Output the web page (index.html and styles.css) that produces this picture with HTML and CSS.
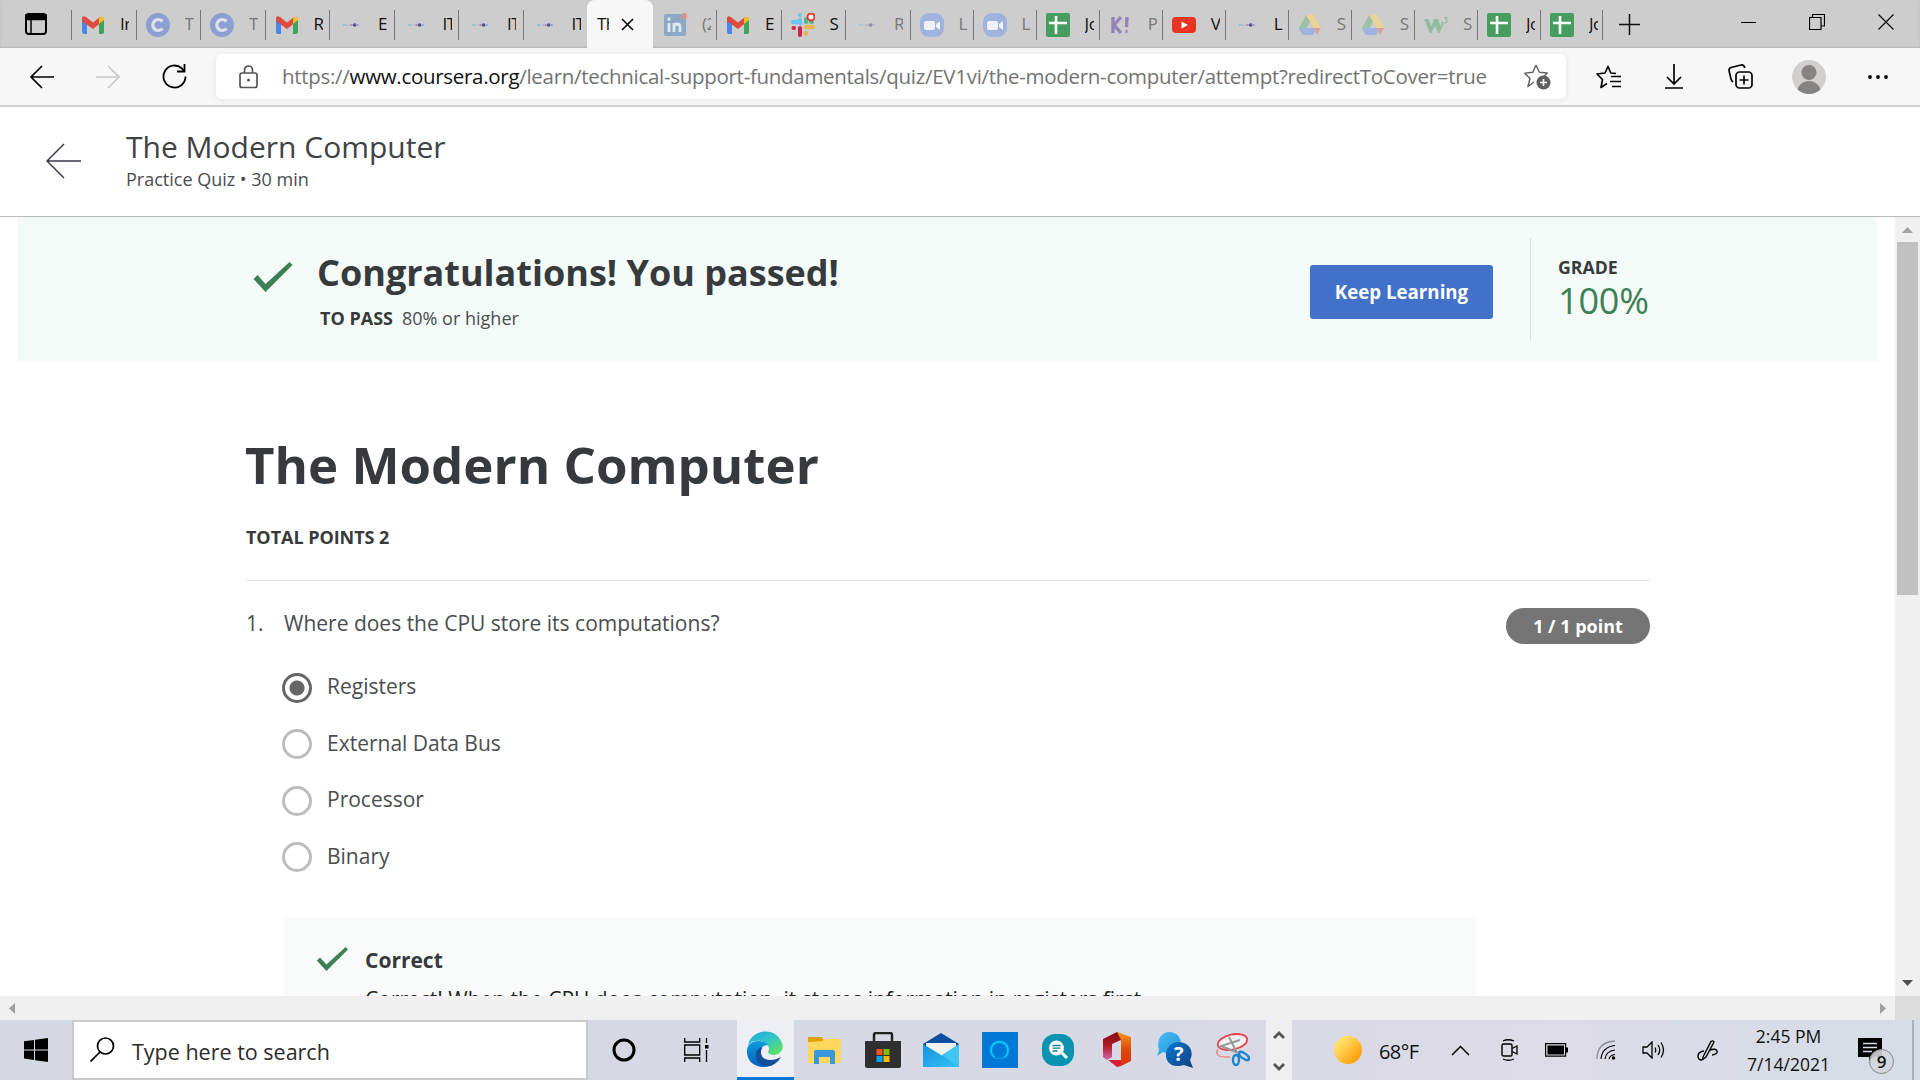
FILE: index.html
```
<!DOCTYPE html>
<html lang="en">
<head>
<meta charset="utf-8">
<title>The Modern Computer</title>
<link rel="stylesheet" href="styles.css">
</head>
<body>
<svg class="defs" width="0" height="0">
  <defs>
    <linearGradient id="edgeTop" x1="0" y1="0" x2="1" y2="1"><stop offset="0" stop-color="#1fa7e0"/><stop offset=".45" stop-color="#2fc3c9"/><stop offset="1" stop-color="#6bea48"/></linearGradient>
    <linearGradient id="edgeLow" x1="0" y1="0" x2="0" y2="1"><stop offset="0" stop-color="#0d9bdc"/><stop offset="1" stop-color="#0a5fc0"/></linearGradient>
    <linearGradient id="sunFill" x1="0" y1="0" x2="1" y2="1"><stop offset=".2" stop-color="#ffe26b"/><stop offset=".9" stop-color="#ff9800"/></linearGradient>
    <linearGradient id="officeLeft" x1="0" y1="0" x2="0" y2="1"><stop offset="0" stop-color="#7d0a10"/><stop offset=".5" stop-color="#b01c28"/><stop offset="1" stop-color="#d06aa8"/></linearGradient>
    <linearGradient id="officeRight" x1="0" y1="0" x2="0" y2="1"><stop offset="0" stop-color="#f49a1c"/><stop offset=".5" stop-color="#dd4a0c"/><stop offset="1" stop-color="#e0340f"/></linearGradient>
    <linearGradient id="bubble" x1="0" y1="0" x2="1" y2="1"><stop offset="0" stop-color="#4cc0f5"/><stop offset="1" stop-color="#1a93d8"/></linearGradient>
    <linearGradient id="bubbleDark" x1="0" y1="0" x2="1" y2="1"><stop offset="0" stop-color="#0a78d4"/><stop offset="1" stop-color="#123f7c"/></linearGradient>
    <linearGradient id="mailBody" x1="0" y1="0" x2="1" y2="1"><stop offset="0" stop-color="#1390e0"/><stop offset="1" stop-color="#37c2f3"/></linearGradient>
    <symbol id="gmail" viewBox="0 0 22 18"><path d="M0 3v13q0 2 2 2h3V7z" fill="#4a86e8"/><path d="M22 3v13q0 2-2 2h-3V7z" fill="#3fa45b"/><path d="M5 8V2.300Q0-2 0 4z" fill="#b9302a"/><path d="M0 3.500Q0-1 4 1l7 5.500L18 1v6.500l-7 5.500L0 5z" fill="#dc4b3e"/><path d="M17 8V2Q22-2 22 4z" fill="#f4bd2c"/></symbol>
    <symbol id="cbadge" viewBox="0 0 24 24"><circle cx="12" cy="12" r="12" fill="#8b9fd3"/><path d="M16.500 8.500a5.500 5.500 0 1 0 0 7" fill="none" stroke="#dde1ec" stroke-width="3.200"/></symbol>
    <symbol id="dots" viewBox="0 0 16 6"><path d="M0 3h4" stroke="#8fbcdc" stroke-width="1.600"/><circle cx="6.500" cy="3" r="1.100" fill="#c8a0b4"/><circle cx="8.800" cy="3" r="1.100" fill="#c07888"/><circle cx="11.700" cy="3" r="1.800" fill="#3f569f"/><circle cx="14.800" cy="3" r="1" fill="#8d99c8"/></symbol>
    <symbol id="zoomcam" viewBox="0 0 24 24"><rect width="24" height="24" rx="9" fill="#9fb3de"/><rect x="4" y="8" width="11" height="9" rx="2" fill="#eef1f8"/><path d="M16 11l4-3v9l-4-3z" fill="#eef1f8"/></symbol>
    <symbol id="sheet" viewBox="0 0 24 24"><rect width="24" height="24" rx="2" fill="#479d5e"/><path d="M10 3v18M3 10h18" stroke="#fff" stroke-width="2.600"/></symbol>
    <symbol id="drive" viewBox="0 0 22 20"><path d="M7 0h8l-7.500 14L4 20 0 13z" fill="#9fc0a4"/><path d="M7 0h8l7 13h-7z" fill="#ead595"/><path d="M4 13h14l-3.500 7H4L0 14z" fill="#9fb4e0"/><path d="M15 13h7l-4 7z" fill="#dd9f9c"/><path d="M11 7l3.500 6h-7z" fill="#cdcdcd"/></symbol>
    <symbol id="tick" viewBox="0 0 40 30"><path d="M1 17l4-4 8 9L37 0l3 3-27 27z"/></symbol>
  </defs>
</svg>

<header class="tabs">
  <div class="tab-menu"><svg width="22" height="22" viewBox="0 0 22 22"><rect x="1" y="1" width="20" height="20" rx="3" fill="none" stroke="#000" stroke-width="2"/><path d="M1 2h20v4.500H1zM6 6v15" stroke="#000" stroke-width="1.500"/></svg></div>
  <div class="tab"><svg class="fav" viewBox="0 0 24 24"><use href="#gmail" x="1" y="3" width="22" height="18"/></svg><span>Ir</span></div>
  <div class="tab asleep"><svg class="fav" viewBox="0 0 24 24"><use href="#cbadge"/></svg><span>Te</span></div>
  <div class="tab asleep"><svg class="fav" viewBox="0 0 24 24"><use href="#cbadge"/></svg><span>Te</span></div>
  <div class="tab"><svg class="fav" viewBox="0 0 24 24"><use href="#gmail" x="1" y="3" width="22" height="18"/></svg><span>R</span></div>
  <div class="tab"><svg class="fav" viewBox="0 0 24 24"><use href="#dots" x="4" y="9" width="16" height="6"/></svg><span>E</span></div>
  <div class="tab"><svg class="fav" viewBox="0 0 24 24"><use href="#dots" x="4" y="9" width="16" height="6"/></svg><span>IT</span></div>
  <div class="tab"><svg class="fav" viewBox="0 0 24 24"><use href="#dots" x="4" y="9" width="16" height="6"/></svg><span>IT</span></div>
  <div class="tab"><svg class="fav" viewBox="0 0 24 24"><use href="#dots" x="4" y="9" width="16" height="6"/></svg><span>IT</span></div>
  <div class="tab active"><span>Th</span><svg width="13" height="13" viewBox="0 0 13 13"><path d="M1 1l11 11M12 1L1 12" stroke="#000" stroke-width="1.600"/></svg></div>
  <div class="tab asleep first"><svg class="fav" viewBox="0 0 24 24"><rect x="1" y="1" width="22" height="22" rx="2" fill="#8ba9c6"/><path d="M6 10v9M11 19v-9M11 14q0-3 3-3t3 3v5" fill="none" stroke="#e3e8ee" stroke-width="2.800"/><circle cx="6" cy="6" r="1.700" fill="#e3e8ee"/><circle cx="21" cy="3" r="3" fill="#d8918d"/></svg><span>(2</span></div>
  <div class="tab"><svg class="fav" viewBox="0 0 24 24"><use href="#gmail" x="1" y="3" width="22" height="18"/></svg><span>E</span></div>
  <div class="tab"><svg class="fav" viewBox="0 0 24 24"><g stroke-width="4" stroke-linecap="round"><path d="M9 2v0M9 7v3M2 9h5" stroke="#64c5ee"/><path d="M15 9V6M20 9h1" stroke="#52b98b"/><path d="M15 14h7M15 20v1" stroke="#e7b548"/><path d="M9 15v7M2.500 15h.500" stroke="#d0224f"/></g><circle cx="20" cy="4" r="3.500" fill="#fff" stroke="#dc3b32" stroke-width="2"/></svg><span>S</span></div>
  <div class="tab asleep"><svg class="fav faded" viewBox="0 0 24 24"><use href="#dots" x="4" y="9" width="16" height="6"/></svg><span>R</span></div>
  <div class="tab asleep"><svg class="fav" viewBox="0 0 24 24"><use href="#zoomcam"/></svg><span>L</span></div>
  <div class="tab asleep"><svg class="fav" viewBox="0 0 24 24"><use href="#zoomcam"/></svg><span>L</span></div>
  <div class="tab"><svg class="fav" viewBox="0 0 24 24"><use href="#sheet"/></svg><span>Jo</span></div>
  <div class="tab asleep"><svg class="fav" viewBox="0 0 24 24"><path d="M4 4v16M12 4l-7 8 7 8M18 4l-.500 10M16.500 18.500h2" fill="none" stroke="#9583b8" stroke-width="3.400"/></svg><span>P</span></div>
  <div class="tab"><svg class="fav" viewBox="0 0 24 24"><rect y="4" width="24" height="16" rx="4" fill="#e93323"/><path d="M9.500 8.500l6.500 3.500-6.500 3.500z" fill="#fff"/></svg><span>V</span></div>
  <div class="tab"><svg class="fav" viewBox="0 0 24 24"><use href="#dots" x="4" y="9" width="16" height="6"/></svg><span>L</span></div>
  <div class="tab asleep"><svg class="fav" viewBox="0 0 24 24"><use href="#drive" x="1" y="2" width="22" height="20"/></svg><span>S</span></div>
  <div class="tab asleep"><svg class="fav" viewBox="0 0 24 24"><use href="#drive" x="1" y="2" width="22" height="20"/></svg><span>S</span></div>
  <div class="tab asleep"><svg class="fav" viewBox="0 0 24 24"><path d="M0 6h4.500l3 7 2.500-7h4l2.500 7 2-5 1 3-4 9h-1l-3.500-7-3.500 7h-1.500z" fill="#93bda3"/><path d="M20 4.500h3l-1.500 2q2 0 1.500 2t-3 1" fill="none" stroke="#93bda3" stroke-width="1.200"/></svg><span>S</span></div>
  <div class="tab"><svg class="fav" viewBox="0 0 24 24"><use href="#sheet"/></svg><span>Jo</span></div>
  <div class="tab last"><svg class="fav" viewBox="0 0 24 24"><use href="#sheet"/></svg><span>Jo</span></div>
  <div class="new-tab"><svg width="21" height="21" viewBox="0 0 21 21"><path d="M10.500 0v21M0 10.500h21" stroke="#111" stroke-width="1.500"/></svg></div>
  <div class="win-buttons">
    <svg width="16" height="16" viewBox="0 0 16 16"><path d="M1 8.500h15" stroke="#000"/></svg>
    <svg width="16" height="16" viewBox="0 0 16 16"><path d="M.500 3.500h11.500v12H.500zM3.500 3V.500h12V12H12.500" fill="none" stroke="#000" stroke-width="1.200"/></svg>
    <svg width="16" height="16" viewBox="0 0 16 16"><path d="M.500.500l15 15M15.500.500l-15 15" stroke="#000" stroke-width="1.100"/></svg>
  </div>
</header>

<nav class="toolbar">
  <div class="tool"><svg width="26" height="24" viewBox="0 0 26 24"><path d="M13 1L2 12l11 11M2 12h23" fill="none" stroke="#000" stroke-width="1.700"/></svg></div>
  <div class="tool"><svg width="26" height="24" viewBox="0 0 26 24"><path d="M13 1l11 11-11 11M24 12H1" fill="none" stroke="#c9c9c9" stroke-width="1.700"/></svg></div>
  <div class="tool"><svg width="25" height="25" viewBox="0 0 25 25"><path d="M23.500 12.500a11 11 0 1 1-3.500-8L22 7" fill="none" stroke="#000" stroke-width="1.800"/><path d="M22.500 0v7.500H15" fill="none" stroke="#000" stroke-width="1.800"/></svg></div>
  <div class="address">
    <svg width="20" height="24" viewBox="0 0 20 24"><rect x="1" y="8" width="17" height="14.500" rx="2" fill="none" stroke="#555" stroke-width="1.700"/><path d="M5.500 8V5a4 4 0 0 1 8 0v3" fill="none" stroke="#555" stroke-width="1.700"/><circle cx="9.500" cy="15" r="1.500" fill="#555"/></svg>
    <span class="url">https://<b>www.coursera.org</b>/learn/technical-support-fundamentals/quiz/EV1vi/the-modern-computer/attempt?redirectToCover=true</span>
    <svg width="27" height="26" viewBox="0 0 27 26"><path d="M12 1l3.300 7.200 8 .800-4 4M10 18l-6 4.500 2-8-5.200-5.200 8-1.100L12 1" fill="none" stroke="#666" stroke-width="1.500" stroke-linejoin="round"/><circle cx="19.500" cy="18.500" r="7" fill="#5f5f5f"/><path d="M19.500 15v7M16 18.500h7" stroke="#fff" stroke-width="1.600"/></svg>
  </div>
  <div class="tool"><svg width="25" height="24" viewBox="0 0 25 24"><path d="M20 8.500l-5.200-.500L12 1.500 9 8l-8 1 5.500 5.500L5 22.500l6-4" fill="none" stroke="#000" stroke-width="1.700" stroke-linejoin="round"/><path d="M15 11.500h10M14 16.500h11M16 21.500h9" stroke="#000" stroke-width="1.700"/></svg></div>
  <div class="tool"><svg width="18" height="25" viewBox="0 0 18 25"><path d="M9 0v20M2 13l7 7 7-7M0 24h18" fill="none" stroke="#000" stroke-width="1.700"/></svg></div>
  <div class="tool"><svg width="25" height="25" viewBox="0 0 25 25"><rect x="8" y="8" width="16" height="16" rx="3.500" fill="none" stroke="#000" stroke-width="1.700"/><path d="M16 11.500v9M11.500 16h9M5 18q-1.500-1-2-3L1 6.500Q1 4 3 3.500L13 1q3-.500 3.800 3" fill="none" stroke="#000" stroke-width="1.700"/></svg></div>
  <div class="tool profile"><svg width="34" height="34" viewBox="0 0 34 34"><clipPath id="av"><circle cx="17" cy="17" r="17"/></clipPath><g clip-path="url(#av)"><rect width="34" height="34" fill="#d2d0ce"/><circle cx="17" cy="12.500" r="7.500" fill="#868483"/><circle cx="17" cy="33" r="12" fill="#868483"/></g></svg></div>
  <div class="tool"><svg width="22" height="4" viewBox="0 0 22 4"><circle cx="4" cy="2" r="1.900"/><circle cx="12" cy="2" r="1.900"/><circle cx="20" cy="2" r="1.900"/></svg></div>
</nav>

<section class="course-bar">
  <svg width="36" height="36" viewBox="0 0 36 36"><path d="M18 1L1 18l17 17M1 18h34" fill="none" stroke="#373a4c" stroke-width="1.500"/></svg>
  <div>
    <h2>The Modern Computer</h2>
    <p>Practice Quiz • 30 min</p>
  </div>
</section>

<div class="viewport">
  <main class="page">
    <section class="banner">
      <svg class="green" width="41" height="30"><use href="#tick" width="41" height="30"/></svg>
      <div class="result">
        <h1>Congratulations! You passed!</h1>
        <p><strong>TO PASS</strong><span>80% or higher</span></p>
      </div>
      <button class="keep">Keep Learning</button>
      <div class="grade"><strong>GRADE</strong><span>100%</span></div>
    </section>
    <section class="quiz">
      <h1>The Modern Computer</h1>
      <h3>TOTAL POINTS 2</h3>
      <div class="question">
        <span class="number">1.</span>
        <p>Where does the CPU store its computations?</p>
        <span class="pill">1 / 1 point</span>
      </div>
      <ul class="options">
        <li><i class="radio on"></i>Registers</li>
        <li><i class="radio"></i>External Data Bus</li>
        <li><i class="radio"></i>Processor</li>
        <li><i class="radio"></i>Binary</li>
      </ul>
      <div class="feedback">
        <svg class="green" width="32" height="24"><use href="#tick" width="32" height="24"/></svg>
        <div><h4>Correct</h4><p>Correct! When the CPU does computation, it stores information in registers first.</p></div>
      </div>
    </section>
  </main>
  <aside class="scroll-y">
    <svg width="11" height="6" viewBox="0 0 11 6"><path d="M0 6L5.500 0 11 6z" fill="#a3a3a3"/></svg>
    <div class="thumb"></div>
    <svg class="down" width="11" height="6" viewBox="0 0 11 6"><path d="M0 0h11L5.500 6z" fill="#505050"/></svg>
  </aside>
</div>
<div class="scroll-x">
  <svg width="6" height="11" viewBox="0 0 6 11"><path d="M6 0v11L0 5.500z" fill="#a3a3a3"/></svg>
  <svg class="right" width="6" height="11" viewBox="0 0 6 11"><path d="M0 0v11l6-5.500z" fill="#a3a3a3"/></svg>
  <div class="corner"></div>
</div>

<footer class="taskbar">
  <div class="start"><svg width="24" height="24" viewBox="0 0 24 24"><path d="M0 3.300l10-1.400v9.500H0zM11 1.700L24 0v11.400H11zM0 12.400h10v9.500L0 20.600zM11 12.400h13V24l-13-1.800z"/></svg></div>
  <div class="search"><svg width="25" height="25" viewBox="0 0 25 25"><circle cx="15.500" cy="9" r="8" fill="none" stroke="#000" stroke-width="1.700"/><path d="M10 15L.500 24.500" stroke="#000" stroke-width="1.700"/></svg><span>Type here to search</span></div>
  <div class="cell wide"><svg width="24" height="24" viewBox="0 0 24 24"><circle cx="12" cy="12" r="10" fill="none" stroke="#000" stroke-width="3"/></svg></div>
  <div class="cell view"><svg width="25" height="24" viewBox="0 0 25 24"><path d="M.700 0v4h15V0M.700 24v-4h15v4M.700 7h15v10H.700zM22.500 0v5M22.500 12v12" fill="none" stroke="#000" stroke-width="1.300"/><path d="M21 7h3.500v3.500H21z"/></svg></div>
  <div class="cell running"><svg width="36" height="36" viewBox="0 0 36 36"><path d="M1 14C5-3 31-5 35.500 14c1.500 8-7 12-13 9-3-2 0-3-.500-6C20 9 6 7 1 14z" fill="url(#edgeTop)"/><path d="M0 19C1 8 16 8 21 14q-8 0-7 9 2 9 12 11C10 40-1 31 0 19z" fill="url(#edgeLow)"/><path d="M14 20c-1 10 11 11 20 6q-5 9-15 9.500C7 34 5 19 15 16z" fill="#12509c"/></svg></div>
  <div class="cell"><svg width="33" height="28" viewBox="0 0 33 28"><path d="M0 1h14l2 4-2 3H0z" fill="#e0a000"/><path d="M0 6l14-1 2-2h17v24H0z" fill="#ffd75e"/><path d="M6 28V16q0-2 2-2h17q2 0 2 2v12h-5v-7H11v7z" fill="#3a96dd"/></svg></div>
  <div class="cell"><svg width="36" height="36" viewBox="0 0 36 36"><path d="M9 12V3q0-2 2-2h14q2 0 2 2v9" fill="none" stroke="#222" stroke-width="2.500"/><path d="M0 9h36v25q0 2-2 2H2q-2 0-2-2z" fill="#2f2f2f"/><path d="M11.500 17h6v6h-6z" fill="#f25022"/><path d="M18.500 17h6v6h-6z" fill="#7fba00"/><path d="M11.500 24h6v6h-6z" fill="#00a4ef"/><path d="M18.500 24h6v6h-6z" fill="#ffb900"/></svg></div>
  <div class="cell"><svg width="36" height="34" viewBox="0 0 36 34"><path d="M0 11L18 0l18 11v6H0z" fill="#0a4fa0"/><path d="M3 10h30v6L18 24 3 16z" fill="#f2f2f2"/><path d="M36 11L0 34h36z" fill="#41c6f3"/><path d="M0 11l36 22v1H0z" fill="url(#mailBody)"/></svg></div>
  <div class="cell"><svg width="36" height="36" viewBox="0 0 36 36"><path d="M0 0h36v36H0z" fill="#0078d7"/><path d="M13 25.500a8.500 8.500 0 1 1 9 0" fill="none" stroke="#00caff" stroke-width="2"/><path d="M13 26.500h9" stroke="#00a5f0"/></svg></div>
  <div class="cell"><svg width="32" height="32" viewBox="0 0 32 32"><rect width="32" height="32" rx="13" fill="#0a93b0"/><circle cx="14.500" cy="14" r="7.500" fill="#fff"/><path d="M19 18l6 6" stroke="#fff" stroke-width="3"/><path d="M10.500 11.500h8M10.500 14.200h8M10.500 17h5" stroke="#0a7f9a" stroke-width="1.300"/></svg></div>
  <div class="cell"><svg width="28" height="35" viewBox="0 0 28 35"><path d="M14 0l4 2v6l-9 4v13l-5 3-4-3V7z" fill="url(#officeLeft)"/><path d="M14 0l14 5v24l-10 5V8z" fill="url(#officeRight)"/><path d="M5 28h13v6l-4 1z" fill="#d51f3a"/></svg></div>
  <div class="cell"><svg width="37" height="36" viewBox="0 0 37 36"><path d="M0 24l2-6C-1 9 4 0 12 0c9 0 14 8 11 15-3 6-11 8-17 5z" fill="url(#bubble)"/><path d="M21 10c13 0 16 11 12 18l3 8-9-3C14 37 8 29 9 21q2-10 12-11z" fill="url(#bubbleDark)"/><text x="17" y="29" class="help">?</text></svg></div>
  <div class="cell last-cell"><svg width="34" height="34" viewBox="0 0 34 34"><path d="M2 16q-5 9 12 8" fill="none" stroke="#e88" stroke-width="1.500"/><ellipse cx="16.500" cy="9" rx="15" ry="7.500" transform="rotate(-12 16.500 9)" fill="#f4f4f6" stroke="#e8414a" stroke-width="1.800"/><path d="M13 4l8 16M24 7L5 13l15 6" fill="none" stroke="#999" stroke-width="2"/><ellipse cx="20" cy="27" rx="3" ry="5" fill="none" stroke="#1c86cd" stroke-width="2.400"/><ellipse cx="28" cy="23" rx="6" ry="2.600" transform="rotate(35 28 23)" fill="none" stroke="#1c86cd" stroke-width="2.400"/></svg></div>
  <div class="spin"><svg width="12" height="9" viewBox="0 0 12 9"><path d="M1 8l5-5 5 5" fill="none" stroke="#555" stroke-width="2.800"/></svg><svg width="12" height="9" viewBox="0 0 12 9"><path d="M1 1l5 5 5-5" fill="none" stroke="#555" stroke-width="2.800"/></svg></div>
  <div class="weather"><svg width="28" height="28"><circle cx="14" cy="14" r="14" fill="url(#sunFill)"/></svg><span>68°F</span></div>
  <div class="tray">
    <svg width="19" height="11" viewBox="0 0 19 11"><path d="M1 10L9.500 1.500 18 10" fill="none" stroke="#000" stroke-width="1.500"/></svg>
    <svg width="17" height="22" viewBox="0 0 17 22"><rect x="1" y="5" width="10" height="12" rx="1.500" fill="none" stroke="#000" stroke-width="1.400"/><path d="M11 9.500L16 7v8l-5-2.500M2 2q5-2.500 11 0M2 20q5 2.500 11 0" fill="none" stroke="#000" stroke-width="1.300"/></svg>
    <svg width="23" height="14" viewBox="0 0 23 14"><path d="M.600.600h20v12.500H.600z" fill="none" stroke="#000" stroke-width="1.200"/><path d="M2.500 2.500h16.500v9H2.500zM21 4.500h2v5h-2z"/></svg>
    <svg width="20" height="20" viewBox="0 0 20 20"><path d="M1 19Q1 2 19 1" fill="none" stroke="#8c8c96" stroke-width="1.300"/><path d="M5 19Q6 7 19 5.500M9 19q1-8 10-9M13 19q1-4 6-4.500" fill="none" stroke="#000" stroke-width="1.200"/><circle cx="17.500" cy="18" r="1.700"/></svg>
    <svg width="23" height="18" viewBox="0 0 23 18"><path d="M1 6h4l5-5v16l-5-5H1z" fill="none" stroke="#000" stroke-width="1.300"/><path d="M13 6.500q1.500 2.500 0 5M16 4q3.500 5 0 10M19 1.500q5 7.500 0 15" fill="none" stroke="#000" stroke-width="1.300"/></svg>
    <svg width="21" height="21" viewBox="0 0 21 21"><path d="M6 17L14 1.500q2-1.500 3 .500L9 17l-3.500 2.500zM13 10q6-2 7 1t-5 4M7 11q-6 1-6 5t4 4" fill="none" stroke="#000" stroke-width="1.400"/></svg>
  </div>
  <div class="clock"><span>2:45 PM</span><span>7/14/2021</span></div>
  <div class="notices"><svg width="25" height="25" viewBox="0 0 25 25"><path d="M0 0h24v19h-8l-5 5v-5H0z"/><path d="M5 5.500h14M5 9.500h14M5 13.500h9" stroke="#d8dbe6" stroke-width="1.300"/></svg><span class="badge">9</span></div>
  <div class="peek"></div>
</footer>
</body>
</html>
```
FILE: styles.css
```
* { box-sizing: border-box; }
body, h1, h2, h3, h4, p, ul { margin: 0; padding: 0; }
body {
  width: 1920px; height: 1080px; overflow: hidden;
  display: flex; flex-direction: column;
  font: 21px/30px "Open Sans", sans-serif; color: #373a3c; background: #fff;
}
svg { display: block; flex: none; }
.defs { position: absolute; }

/* Tab strip */
.tabs {
  height: 48px; flex: none; background: #cdcdcd; color: #111;
  display: grid; grid-template-columns: 71px repeat(8, 64.5px) 66px 63px repeat(3, 64.5px) repeat(11, 63.050px) 53px 1fr;
  font-size: 18px; align-items: center;
  box-shadow: inset 0 -1px 2px #b5b5b5;
}
.tab-menu { padding-left: 25px; }
.tab { display: flex; height: 30px; align-items: center; border-left: 1.500px solid #777; padding-left: 9px; margin-top: 2px; }
.tab span { width: 9px; margin: -2px 0 0 15px; overflow: hidden; white-space: nowrap; font-size: 17px; letter-spacing: -.5px; }
.tab.asleep span { color: #777; }
.tab.first { border-left-color: transparent; }
.tab.last { border-right: 1.500px solid #777; }
.tab.active { height: 48px; margin: 0; border: 0; background: #f7f7f7; border-radius: 8px 8px 0 0; padding-left: 10px; }
.tab.active span { width: 12px; margin: 0 12px 0 0; }
.fav { width: 24px; height: 24px; }
.faded { opacity: .5; }
.new-tab { padding-left: 16px; }
.win-buttons { display: flex; justify-content: flex-end; gap: 53px; padding-right: 26px; margin-top: -5px; }

/* Toolbar */
.toolbar { height: 59px; flex: none; display: flex; align-items: center; background: #f7f7f7; border-bottom: 2px solid #d0d0d0; padding-left: 9px; }
.tool { width: 66px; display: flex; justify-content: center; }
.profile { width: 71px; }
.address {
  width: 1350px; height: 45px; margin: 0 9px; background: #fff; border-radius: 6px;
  display: flex; align-items: center; padding: 0 15px 0 23px; box-shadow: 0 1px 6px #e4e4e4;
}
.url { flex: 1; margin: -2px 0 0 23px; font-size: 20.500px; letter-spacing: -.295px; color: #737373; white-space: nowrap; }
.url b { font-weight: 400; color: #111; }

/* Course header */
.course-bar { height: 110px; flex: none; display: flex; padding: 20px 0 0 46px; gap: 44px; border-bottom: 1px solid #b9b9b9; }
.course-bar svg { margin-top: 16px; }
.course-bar h2 { font-size: 30px; line-height: 40px; font-weight: 400; color: #404345; }
.course-bar p { font-size: 18px; line-height: 24px; color: #4a4d4f; }

/* Quiz page */
.viewport { height: 779px; flex: none; display: flex; overflow: hidden; }
.page { width: 1895px; overflow: hidden; }
.green { fill: #3d8056; }
.banner { height: 144px; margin: 0 18px; padding-left: 234px; background: #f3faf8; display: flex; }
.banner .green { margin-top: 45px; }
.result { width: 1017px; padding: 31px 0 0 24px; }
.result h1 { font-size: 36px; line-height: 50px; }
.result p { margin: 8px 0 0 3px; font-size: 18px; line-height: 24px; display: flex; gap: 9px; }
.result span { color: #4a4d4f; }
.keep { width: 183px; height: 54px; margin-top: 48px; padding: 0; border: 0; border-radius: 3px; background: #4171c8; color: #fff; font: 700 18.700px/54px "Open Sans", sans-serif; }
.grade { margin: 21px 0 0 37px; height: 103px; border-left: 1px solid #dbe0df; padding: 17px 0 0 27px; display: flex; flex-direction: column; }
.grade strong { font-size: 17.700px; line-height: 24px; }
.grade span { font-size: 36px; line-height: 44px; color: #3d8056; letter-spacing: -.2px; }
.quiz { padding: 73px 245px 0 246px; }
.quiz h1 { font-size: 51px; line-height: 60px; margin-left: -1px; }
.quiz h3 { margin-top: 31px; padding-bottom: 31px; font-size: 18px; line-height: 24px; border-bottom: 1px solid #e1e1e1; letter-spacing: -.05px; }
.question { display: flex; margin-top: 27px; color: #4a4d4f; }
.number { width: 38px; }
.question p { flex: 1; }
.pill { width: 144px; height: 36px; border-radius: 18px; background: #757575; color: #fff; font-size: 18px; font-weight: 700; line-height: 36px; text-align: center; }
.options { list-style: none; margin: 27px 0 0 36px; color: #4a4d4f; }
.options li { display: flex; height: 56.500px; }
.radio { width: 30px; height: 30px; margin: 1.500px 15px 0 0; border: 3px solid #bdbdbd; border-radius: 50%; }
.radio.on { border-color: #666; background: radial-gradient(circle, #666 7px, #fff 8px); }
.feedback { width: 1192px; margin: 20px 0 0 38px; height: 200px; background: #f8fbfa; display: flex; padding: 28px 0 0 32px; gap: 17px; }
.feedback .green { margin-top: 2px; }
.feedback h4 { font-size: 21px; line-height: 30px; }
.feedback p { margin-top: 9px; letter-spacing: -.01px; color: #222; }

/* Scrollbars */
.scroll-y { width: 25px; background: #f0f0f0; padding: 10px 2px 10px; display: flex; flex-direction: column; align-items: center; }
.thumb { width: 21px; height: 353px; margin-top: 9px; background: #c1c1c1; }
.down { margin-top: auto; }
.scroll-x { height: 24px; flex: none; display: flex; align-items: center; background: #f0f0f0; padding-left: 9px; }
.right { margin: 0 9px 0 auto; }
.corner { width: 25px; height: 24px; background: #dcdcdc; }

/* Taskbar */
.taskbar { height: 60px; flex: none; display: flex; color: #111; background: linear-gradient(90deg, #d5d8e3, #d7d9e5 60%, #dddbe7 80%, #d5dde6); }
.start { width: 72px; padding: 18px 0 0 24px; }
.search { width: 516px; background: #fff; border: 2px solid #cacaca; display: flex; padding: 15px 0 0 16px; color: #2b2b2b; }
.search span { margin: 0 0 0 17px; font-size: 21.500px; line-height: 30px; }
.cell { width: 58.500px; height: 60px; display: flex; align-items: center; justify-content: center; padding: 0 0 1px 2px; }
.wide { width: 72px; padding: 0; }
.view { width: 77px; padding: 0 5px 0 0; }
.running { width: 57px; background: #eeeff5; border-bottom: 3px solid #0078d7; padding: 0 2px 0 0; }
.last-cell { padding: 0 0 1px; }
.help { font: 700 20px "Open Sans", sans-serif; fill: #fff; }
.spin { width: 26px; margin-left: 4px; background: #efefef; display: flex; flex-direction: column; align-items: center; justify-content: space-between; padding: 10px 0 8px; }
.weather { width: 158px; display: flex; align-items: center; padding-left: 42px; font-size: 20px; letter-spacing: -.6px; }
.weather span { margin: 4px 0 0 17px; }
.tray { width: 266px; display: grid; grid-template-columns: 50px 44px 51px 46px 55px 20px; align-items: center; padding-left: 1px; }
.clock { width: 141px; display: flex; flex-direction: column; align-items: center; padding: 2px 0 0 4px; font-size: 17.500px; line-height: 28px; }
.notices { width: 55px; padding: 18px 0 0 1px; position: relative; }
.badge { position: absolute; left: 12px; top: 29px; width: 25px; height: 25px; border-radius: 50%; border: 1px solid #888; background: #d3d5dae6; font: 600 17px/23px "Open Sans", sans-serif; text-align: center; }
.peek { width: 2px; background: #a9b0ba; }
```
